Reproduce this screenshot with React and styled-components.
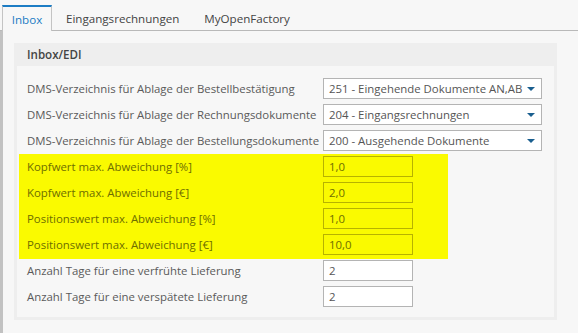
import React from "react";
import styled, { createGlobalStyle } from "styled-components";

const Global = createGlobalStyle`
  html, body { margin: 0; padding: 0; background: #f7f7f7; }
  body { font-family: "Open Sans", "Noto Sans", sans-serif; font-size: 11.4px; color: #5a5a5a; }
  * { box-sizing: border-box; }
`;

const Page = styled.div`
  width: 578px;
  height: 333px;
  background: #f7f7f7;
  padding-top: 5px;
  overflow: hidden;
`;

const TabBar = styled.div`
  display: flex;
  height: 26px;
  border-bottom: 1px solid #b9b9b9;
  padding-left: 2px;
`;

const Tab = styled.div`
  height: ${(p) => (p.$active ? "26px" : "25px")};
  padding: 0 ${(p) => (p.$active ? "10px" : "12.5px")};
  display: flex;
  align-items: center;
  font-size: 11.6px;
  color: ${(p) => (p.$active ? "#1c7cc4" : "#444")};
  background: ${(p) => (p.$active ? "#f7f7f7" : "transparent")};
  border-top: ${(p) => (p.$active ? "2px solid #1c7cc4" : "2px solid transparent")};
  border-left: ${(p) => (p.$active ? "1px solid #c4c4c4" : "none")};
  border-right: ${(p) => (p.$active ? "1px solid #c4c4c4" : "none")};
  margin-bottom: ${(p) => (p.$active ? "-1px" : "0")};
  margin-right: ${(p) => (p.$active ? "1.5px" : "0")};
  width: ${(p) => (p.$w ? `${p.$w}px` : "auto")};
  justify-content: center;
  white-space: nowrap;
`;

const Body = styled.div`
  border-left: 3px solid #c2c2c2;
  height: 302px;
  padding: 12px 0 0 11px;
`;

const Panel = styled.div`
  width: 543px;
  height: 277px;
  background: #eeeeee;
  padding: 0 3px 3px 3px;
  display: flex;
  flex-direction: column;
`;

const PanelHeader = styled.div`
  height: 23px;
  display: flex;
  align-items: center;
  padding-left: 10px;
  font-weight: 600;
  font-size: 11.6px;
  color: #444;
`;

const PanelInner = styled.div`
  flex: 1;
  background: #f7f7f7;
  padding: 12px 0 0 10px;
  display: flex;
  flex-direction: column;
  gap: 5px;
`;

const Row = styled.div`
  display: flex;
  align-items: center;
  height: 21px;
  padding-left: ${(p) => (p.$hl ? "8px" : "0")};
`;

const Label = styled.div`
  width: 296px;
  flex: none;
  white-space: nowrap;
  font-size: 11.4px;
  color: ${(p) => (p.$hl ? "#6e6e00" : "#5a5a5a")};
`;

const Highlight = styled.div`
  margin: -2px 0 -4px -8px;
  width: 429px;
  background: #fafa00;
  display: flex;
  flex-direction: column;
  gap: 5px;
  padding: 2px 0 4px 0;
`;

const Select = styled.div`
  width: 219px;
  height: 21px;
  border: 1px solid #b4b4b4;
  background: #ffffff;
  display: flex;
  align-items: center;
  justify-content: space-between;
  padding: 0 6px 0 5px;
  font-size: 11.4px;
  color: #555;
  white-space: nowrap;
`;

const Arrow = styled.span`
  width: 0;
  height: 0;
  border-left: 4px solid transparent;
  border-right: 4px solid transparent;
  border-top: 4px solid #1a5f8f;
`;

const Input = styled.div`
  width: 90px;
  height: 21px;
  border: 1px solid ${(p) => (p.$hl ? "#b7b200" : "#b4b4b4")};
  background: ${(p) => (p.$hl ? "transparent" : "#ffffff")};
  display: flex;
  align-items: center;
  padding-left: 5px;
  font-size: 11.4px;
  color: ${(p) => (p.$hl ? "#6e6e00" : "#555")};
`;

const selects = [
  ["DMS-Verzeichnis für Ablage der Bestellbestätigung", "251 - Eingehende Dokumente AN,AB"],
  ["DMS-Verzeichnis für Ablage der Rechnungsdokumente", "204 - Eingangsrechnungen"],
  ["DMS-Verzeichnis für Ablage der Bestellungsdokumente", "200 - Ausgehende Dokumente"],
];

const highlighted = [
  ["Kopfwert max. Abweichung [%]", "1,0"],
  ["Kopfwert max. Abweichung [€]", "2,0"],
  ["Positionswert max. Abweichung [%]", "1,0"],
  ["Positionswert max. Abweichung [€]", "10,0"],
];

const plain = [
  ["Anzahl Tage für eine verfrühte Lieferung", "2"],
  ["Anzahl Tage für eine verspätete Lieferung", "2"],
];

export default function App() {
  return (
    <Page>
      <Global />
      <TabBar>
        <Tab $active $w={50}>Inbox</Tab>
        <Tab>Eingangsrechnungen</Tab>
        <Tab>MyOpenFactory</Tab>
      </TabBar>
      <Body>
        <Panel>
          <PanelHeader>Inbox/EDI</PanelHeader>
          <PanelInner>
            {selects.map(([l, v]) => (
              <Row key={l}>
                <Label>{l}</Label>
                <Select>
                  <span>{v}</span>
                  <Arrow />
                </Select>
              </Row>
            ))}
            <Highlight>
              {highlighted.map(([l, v]) => (
                <Row key={l} $hl>
                  <Label $hl>{l}</Label>
                  <Input $hl>{v}</Input>
                </Row>
              ))}
            </Highlight>
            {plain.map(([l, v]) => (
              <Row key={l}>
                <Label>{l}</Label>
                <Input>{v}</Input>
              </Row>
            ))}
          </PanelInner>
        </Panel>
      </Body>
    </Page>
  );
}
